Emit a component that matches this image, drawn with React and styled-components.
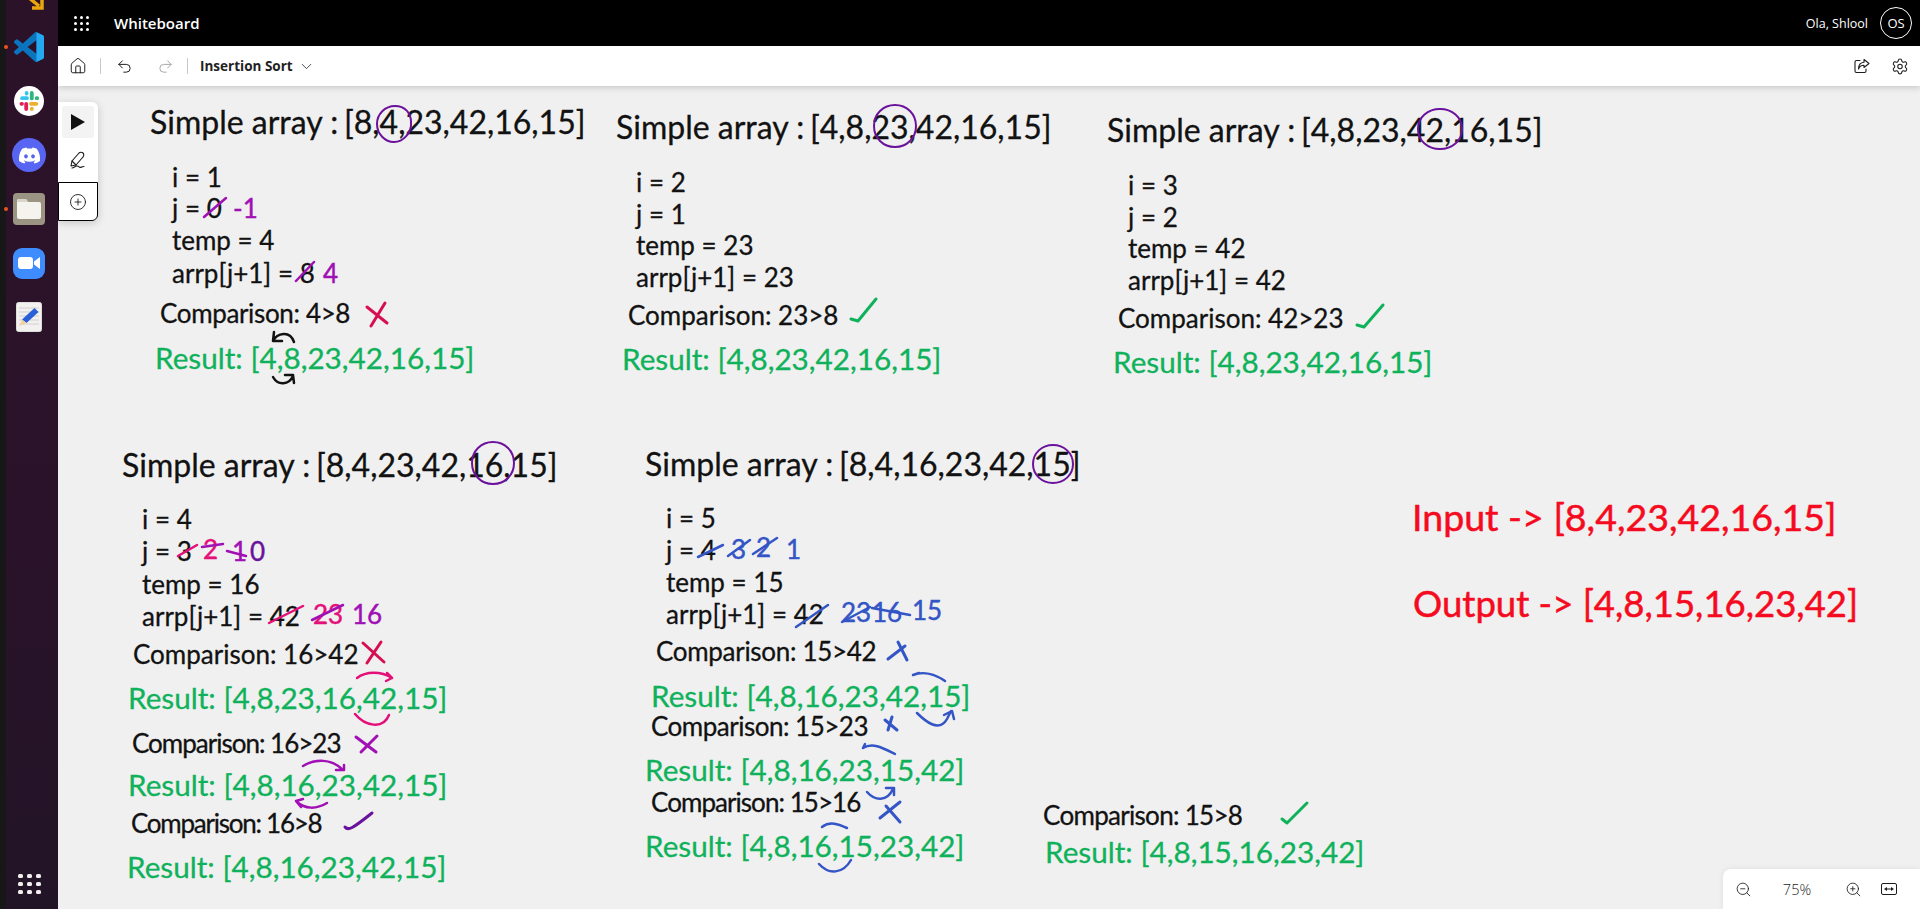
import React from 'react'
import styled, { createGlobalStyle } from 'styled-components'
import { Home, Undo2, Redo2, ChevronDown, Settings, ZoomIn, ZoomOut, CirclePlus } from 'lucide-react'
import { FaDiscord } from 'react-icons/fa6'

const GlobalStyle = createGlobalStyle`
  html, body { margin: 0; padding: 0; height: 100%; overflow: hidden; }
  body { font-family: "Open Sans", "Liberation Sans", sans-serif; }
`

const BLACK = '#121212'
const GREEN = '#0fb25b'
const RED = '#f50a20'
const PURPLE = '#a010b4'
const DEEP = '#6b129c'
const PINK = '#e3107a'
const CRIMSON = '#d60f52'
const BLUE = '#3355c6'

// lines: [text, x, y, letter spacing]
const notes = [
  {
    x: 150, y: 122, array: '[8,4,23,42,16,15]', varX: 172,
    vars: [['i = 1', 177], ['j = 0', 208], ['temp = 4', 240], ['arrp[j+1] = 8', 273]],
    lines: [['Comparison: 4>8', 160, 313, -0.35], ['Result: [4,8,23,42,16,15]', 155, 358]],
    fixes: [['-1', 233, 208, PURPLE], ['4', 323, 273, PURPLE]],
  },
  {
    x: 616, y: 127, array: '[4,8,23,42,16,15]', varX: 636,
    vars: [['i = 2', 182], ['j = 1', 214], ['temp = 23', 245], ['arrp[j+1] = 23', 277]],
    lines: [['Comparison: 23>8', 628, 315], ['Result: [4,8,23,42,16,15]', 622, 359]],
    fixes: [],
  },
  {
    x: 1107, y: 130, array: '[4,8,23,42,16,15]', varX: 1128,
    vars: [['i = 3', 185], ['j = 2', 217], ['temp = 42', 248], ['arrp[j+1] = 42', 280]],
    lines: [['Comparison: 42>23', 1118, 318], ['Result: [4,8,23,42,16,15]', 1113, 362]],
    fixes: [],
  },
  {
    x: 122, y: 465, array: '[8,4,23,42,16,15]', varX: 142,
    vars: [['i = 4', 519], ['j = 3', 551], ['temp = 16', 584], ['arrp[j+1] = 42', 616]],
    lines: [
      ['Comparison: 16>42', 133, 654], ['Result: [4,8,23,16,42,15]', 128, 698],
      ['Comparison: 16>23', 132, 743, -1], ['Result: [4,8,16,23,42,15]', 128, 785],
      ['Comparison: 16>8', 131, 823, -1.25], ['Result: [4,8,16,23,42,15]', 127, 867],
    ],
    fixes: [
      ['2', 203, 549, PINK], ['1', 232, 551, PURPLE], ['0', 250, 551, DEEP],
      ['23', 313, 614, PINK], ['16', 352, 614, PURPLE],
    ],
  },
  {
    x: 645, y: 464, array: '[8,4,16,23,42,15]', varX: 666,
    vars: [['i = 5', 518], ['j = 4', 550], ['temp = 15', 582], ['arrp[j+1] = 42', 614]],
    lines: [
      ['Comparison: 15>42', 656, 651, -0.3], ['Result: [4,8,16,23,42,15]', 651, 696],
      ['Comparison: 15>23', 651, 726, -0.5], ['Result: [4,8,16,23,15,42]', 645, 770],
      ['Comparison: 15>16', 651, 802, -0.95], ['Result: [4,8,16,15,23,42]', 645, 846],
    ],
    fixes: [
      ['3', 731, 549, BLUE], ['2', 756, 547, BLUE], ['1', 786, 549, BLUE],
      ['23', 841, 612, BLUE], ['16', 872, 612, BLUE], ['15', 912, 610, BLUE],
    ],
  },
  {
    vars: [],
    lines: [['Comparison: 15>8', 1043, 815, -0.7], ['Result: [4,8,15,16,23,42]', 1045, 852]],
    fixes: [],
  },
]

// pen strokes in page coordinates: [path, colour, width]
const strokes = [
  ['M411 122c1 11-8 20-17 20s-17-8-17-18 8-18 18-18 16 7 16 16', DEEP, 2],
  ['M204 217l22-19', PURPLE, 2.5],
  ['M296 281l18-19', PURPLE, 2.5],
  ['M367 307l20 16M385 303l-14 23', CRIMSON, 3],
  ['M273 341c4-8 17-11 21 1M274 332l-1 9 9 0', BLACK, 2.5],
  ['M273 377c5 9 16 8 20-1M293 375l-8 0M293 375l1 8', BLACK, 2.5],

  ['M916 126c0 12-9 21-21 21s-21-9-21-21 9-21 21-21 21 9 21 21', DEEP, 2],
  ['M851 319l7 2 18-22', GREEN, 3],

  ['M1462 129c0 12-10 20-22 20s-22-8-22-20 10-20 22-20 22 8 22 20', DEEP, 2],
  ['M1357 325l7 2 19-22', GREEN, 3],

  ['M514 463c0 12-9 21-21 21s-21-9-21-21 9-21 21-21 21 9 21 21', DEEP, 2],
  ['M178 556l19-11', PINK, 2.5],
  ['M202 547l21-3', PURPLE, 2.5],
  ['M227 551l19 5', PURPLE, 2.5],
  ['M269 623l34-17', PINK, 2.5],
  ['M312 620l31-15', PURPLE, 2.5],
  ['M363 643l21 19M381 642l-14 21', CRIMSON, 3],
  ['M357 678c9-7 24-7 35 0M387 673l5 5-6 3', PINK, 2.5],
  ['M355 714c10 12 28 16 34 1', PINK, 2.5],
  ['M356 737l20 15M377 736l-16 16', PURPLE, 3],
  ['M303 766c12-7 28-8 40 4M336 770l8 0 0-5', PURPLE, 2.5],
  ['M327 803c-10 6-22 7-31-2M296 801l7-2M296 801l5 6', PURPLE, 2.5],
  ['M345 827c3 4 7 2 27-14', DEEP, 3],

  ['M1073 464c0 11-9 19-20 19s-20-8-20-19 9-19 20-19 20 8 20 19', DEEP, 2],
  ['M698 557l25-12', BLUE, 2.5],
  ['M728 556l22-16', BLUE, 2.5],
  ['M753 554l24-16', BLUE, 2.5],
  ['M796 627l32-22', BLUE, 2.5],
  ['M842 622l28-15', BLUE, 2.5],
  ['M872 608l38 7', BLUE, 2.5],
  ['M888 659l17-13M898 642l9 18', BLUE, 3],
  ['M913 675c10-4 22-1 32 6M913 675l6-2', BLUE, 2.5],
  ['M917 713c8 8 22 20 30 6 2-4 3-6 4-8M944 715l8-4 2 8', BLUE, 2.5],
  ['M885 720l12 10M892 717l-4 13', BLUE, 3],
  ['M863 748c10-6 20 0 32 6M863 748l2-4', BLUE, 2.5],
  ['M867 792c8 9 20 10 26-3M886 788l8 0 0 7', BLUE, 2.5],
  ['M880 818l20-16M886 806l14 16', BLUE, 3],
  ['M822 827c8-6 16-3 25 1M822 827l5-3', BLUE, 2.5],
  ['M819 864c10 11 24 10 32-4', BLUE, 2.5],

  ['M1282 819l5 4 20-20', GREEN, 3],
]

const Page = styled.div`
  display: flex;
  width: 1920px;
  height: 909px;
  overflow: hidden;
`

const Dock = styled.aside`
  box-sizing: border-box;
  width: 58px;
  height: 909px;
  flex: none;
  display: flex;
  flex-direction: column;
  align-items: center;
  padding-right: 6px;
  border-left: 6px solid #171717;
  background: linear-gradient(180deg, #2c1229 0%, #2a132a 60%, #221427 100%);
`

const DockSlot = styled.div`
  position: relative;
  height: ${p => p.$h || 54}px;
  width: 100%;
  display: flex;
  align-items: ${p => p.$top ? 'flex-start' : 'center'};
  justify-content: center;
`

const TopArrow = styled.svg`
  margin-left: 14px;
`

const RunningDot = styled.span`
  position: absolute;
  left: -2px;
  top: 50%;
  width: 4px;
  height: 4px;
  margin-top: -2px;
  border-radius: 50%;
  background: #e95420;
`

const Tile = styled.div`
  box-sizing: border-box;
  width: ${p => p.$w}px;
  height: ${p => p.$h}px;
  border-radius: ${p => p.$r}px;
  background: ${p => p.$bg};
  display: flex;
  align-items: center;
  justify-content: center;
  color: #fff;
`

const DockGrid = styled.div`
  margin-top: auto;
  margin-bottom: 15px;
  display: grid;
  grid-template-columns: repeat(3, 5px);
  gap: 4px 4px;
  span { height: 4px; background: #f2eeee; border-radius: 1.5px; }
`

const Main = styled.div`
  flex: 1;
  min-width: 0;
  display: flex;
  flex-direction: column;
`

const TopBar = styled.header`
  height: 46px;
  flex: none;
  background: #000;
  color: #fff;
  display: flex;
  align-items: center;
  padding: 0 8px 0 16px;
`

const Waffle = styled.div`
  display: grid;
  grid-template-columns: repeat(3, 3px);
  gap: 3px;
  margin-right: 25px;
  span { width: 3px; height: 3px; background: #fff; border-radius: 50%; }
`

const AppName = styled.div`
  font-size: 15px;
  font-weight: 600;
`

const UserName = styled.div`
  margin-left: auto;
  margin-right: 12px;
  font-size: 12.5px;
`

const Avatar = styled.div`
  box-sizing: border-box;
  width: 32px;
  height: 32px;
  border: 1px solid #fff;
  border-radius: 50%;
  font-size: 13px;
  display: flex;
  align-items: center;
  justify-content: center;
`

const ToolBar = styled.div`
  position: relative;
  z-index: 2;
  height: 40px;
  flex: none;
  background: #fff;
  box-shadow: 0 2px 6px rgba(0, 0, 0, 0.16);
  display: flex;
  align-items: center;
  padding-left: 11px;
  color: #222;
`

const BarButton = styled.button`
  border: 0;
  background: none;
  padding: 0;
  width: 18px;
  height: 18px;
  display: flex;
  align-items: center;
  justify-content: center;
  color: ${p => p.$off ? '#a8a8a8' : '#1c1c1c'};
  margin-left: ${p => p.$ml || 0}px;
`

const Divider = styled.span`
  width: 1px;
  height: 16px;
  background: #c8c8c8;
  margin-left: ${p => p.$ml}px;
`

const BoardName = styled.div`
  margin-left: 12px;
  font-size: 13.5px;
  font-weight: 700;
  color: #222;
`

const BarRight = styled.div`
  margin-left: auto;
  margin-right: 11px;
  display: flex;
  gap: 20px;
`

const Canvas = styled.main`
  position: relative;
  flex: 1;
  background: #f0f0f0;
  overflow: hidden;
`

// everything hand written sits on the free canvas at its page position
const Ink = styled.div`
  position: absolute;
  left: ${p => p.$x - 58}px;
  top: ${p => p.$y - 86}px;
  transform: translateY(-50%);
  white-space: nowrap;
  font-family: Lato, "Open Sans", sans-serif;
  line-height: 1;
  font-size: ${p => p.$size}px;
  letter-spacing: ${p => p.$track || 0}px;
  color: ${p => p.$color || BLACK};
  -webkit-text-stroke: ${p => p.$pen || 0.3}px ${p => p.$color || BLACK};
`

const TitleLabel = styled.span`
  display: inline-block;
  width: 194px;
`

const StrokeLayer = styled.svg`
  position: absolute;
  left: 0;
  top: 0;
  width: 1862px;
  height: 823px;
  pointer-events: none;
`

const Palette = styled.div`
  position: absolute;
  left: 0;
  top: 16px;
  width: 40px;
  background: #fff;
  border-radius: 0 6px 6px 0;
  box-shadow: 0 2px 8px rgba(0, 0, 0, 0.18);
  display: flex;
  flex-direction: column;
  align-items: center;
  gap: 6px;
  padding-top: 4px;
`

const PaletteItem = styled.div`
  width: 32px;
  height: 32px;
  border-radius: 3px;
  background: ${p => p.$on ? '#f3f3f3' : 'transparent'};
  display: flex;
  align-items: center;
  justify-content: center;
  color: #1c1c1c;
`

const AddItem = styled.div`
  box-sizing: border-box;
  width: 40px;
  height: 39px;
  border: 1px solid #000;
  border-radius: 0 0 6px 0;
  background: #fff;
  display: flex;
  align-items: center;
  justify-content: center;
  color: #1c1c1c;
`

const ZoomBar = styled.div`
  position: absolute;
  right: 0;
  bottom: 0;
  width: 197px;
  height: 40px;
  background: #fff;
  border-top-left-radius: 8px;
  box-shadow: 0 0 6px rgba(0, 0, 0, 0.08);
  display: flex;
  align-items: center;
  padding-left: 12px;
  box-sizing: border-box;
  color: #1c1c1c;
`

const ZoomValue = styled.div`
  width: 76px;
  margin: 0 10px 0 7px;
  text-align: center;
  font-size: 14.5px;
  font-weight: 300;
`

const VsCode = () => (
  <svg width="30" height="30" viewBox="0 0 24 24">
    <path fill="#0a74bd" d="M23.15 2.587L18.21.21a1.494 1.494 0 0 0-1.705.29l-9.46 8.63-4.12-3.128a.999.999 0 0 0-1.276.057L.327 7.261A1 1 0 0 0 .326 8.74L3.899 12 .326 15.26a1 1 0 0 0 .001 1.479L1.65 17.94a.999.999 0 0 0 1.276.057l4.12-3.128 9.46 8.63a1.492 1.492 0 0 0 1.704.29l4.942-2.377A1.5 1.5 0 0 0 24 20.06V3.939a1.5 1.5 0 0 0-.85-1.352zm-5.146 14.861L10.826 12l7.178-5.448v10.896z" />
    <path fill="#24a8ef" d="M18 .1v5.9l0 12v5.9l5.1-2.4A1.5 1.5 0 0 0 24 20.06V3.94a1.5 1.5 0 0 0-.85-1.35z" />
  </svg>
)

const Slack = () => (
  <svg width="30" height="30" viewBox="0 0 30 30">
    <circle cx="15" cy="15" r="15" fill="#fff" />
    <g fill="none" strokeWidth="3.8" strokeLinecap="round">
      <path stroke="#36c5f0" d="M8 12.2h5M12.6 7v.6" />
      <path stroke="#2eb67d" d="M17.800 7v5.400M22.600 12.200h.6" />
      <path stroke="#ecb22e" d="M17 17.800h5.400M17.800 22.600v.4" />
      <path stroke="#e01e5a" d="M12.200 17.800v5.200M7.400 17.800h.6" />
    </g>
  </svg>
)

const Folder = () => (
  <svg width="24" height="20" viewBox="0 0 24 20">
    <path fill="#f5f3ee" d="M2 0h7l2 3h11a2 2 0 0 1 2 2v13a2 2 0 0 1-2 2H2a2 2 0 0 1-2-2V2a2 2 0 0 1 2-2z" />
    <path fill="#d9d5cb" d="M2 0h7l2 3H0V2a2 2 0 0 1 2-2z" />
  </svg>
)

const Editor = () => (
  <svg width="26" height="30" viewBox="0 0 26 30">
    <rect x="0.5" y="0.5" width="25" height="29" rx="2" fill="#f2f1ef" stroke="#ddd" />
    <path stroke="#c9c9c9" strokeWidth="0.8" d="M3 6h20M3 10h20M3 14h20M3 18h20M3 22h20" />
    <path fill="#2a5fd8" d="M18.5 6l4 4-12 11-4.500-3.500z" />
    <path fill="#f5cf9d" d="M6 17.500l4.500 3.500-7 3z" />
  </svg>
)

const PenIcon = () => (
  <svg width="18" height="18" viewBox="0 0 18 18" fill="none" stroke="#1c1c1c" strokeWidth="1.1" strokeLinecap="round" strokeLinejoin="round">
    <path d="M2 15l1-5 7-8c1-1 3-1 4 0s1 3 0 4l-7 8z" />
    <path d="M3 10l4 4M3 17c2 0 3-2 5-2s2 1.500 3 1.500 2-1 4-1" />
  </svg>
)

const ShareIcon = () => (
  <svg width="16" height="16" viewBox="0 0 16 16" fill="none" stroke="#1c1c1c" strokeWidth="1.1" strokeLinejoin="round" strokeLinecap="round">
    <path d="M6 2.500H2.500a1.500 1.500 0 0 0-1.500 1.500v9a1.500 1.500 0 0 0 1.500 1.500h8a1.500 1.500 0 0 0 1.500-1.500v-2" />
    <path d="M10 1.500l5 4-5 4V7.300C7.500 7.300 5.500 8.500 4.500 11c0-4 2-6.500 5.500-6.800z" />
  </svg>
)

const FitIcon = () => (
  <svg width="16" height="12" viewBox="0 0 16 12" fill="none" stroke="#1c1c1c" strokeWidth="1">
    <rect x="0.5" y="0.5" width="15" height="11" rx="1.500" />
    <path d="M5 6h6" />
    <path fill="#1c1c1c" stroke="none" d="M6 4v4L3 6zM10 4v4l3-2z" />
  </svg>
)

const dots = n => Array.from({ length: n }, (_, i) => <span key={i} />)

function Note({ note }) {
  return (
    <>
      {note.array && (
        <Ink $x={note.x} $y={note.y} $size={32}>
          <TitleLabel>Simple array :</TitleLabel>{note.array}
        </Ink>
      )}
      {note.vars.map(([text, y]) => (
        <Ink key={text} $x={note.varX} $y={y} $size={26}>{text}</Ink>
      ))}
      {note.lines.map(([text, x, y, track]) => {
        const result = text.startsWith('Result')
        return (
          <Ink key={text + y} $x={x} $y={y} $size={result ? 29.7 : 26} $track={track} $color={result ? GREEN : BLACK}>{text}</Ink>
        )
      })}
      {note.fixes.map(([text, x, y, color]) => (
        <Ink key={text + x} $x={x} $y={y} $size={26} $color={color} $pen={0.45}>{text}</Ink>
      ))}
    </>
  )
}

export default function App() {
  return (
    <Page>
      <GlobalStyle />
      <Dock>
        <DockSlot $h={20} $top>
          <TopArrow width="18" height="11" viewBox="0 0 18 11" fill="none" stroke="#e8a60c" strokeWidth="3.500">
            <path d="M1 -3l11 9M15 -2v10H5" />
          </TopArrow>
        </DockSlot>
        <DockSlot><RunningDot /><VsCode /></DockSlot>
        <DockSlot><Slack /></DockSlot>
        <DockSlot>
          <Tile $w={34} $h={34} $r={17} $bg="#5865f2"><FaDiscord size={23} /></Tile>
        </DockSlot>
        <DockSlot>
          <RunningDot />
          <Tile $w={32} $h={32} $r={4} $bg="#9b9482"><Folder /></Tile>
        </DockSlot>
        <DockSlot>
          <Tile $w={32} $h={31} $r={9} $bg="#3f8cff">
            <svg width="22" height="12" viewBox="0 0 22 12" fill="#fff">
              <rect width="15" height="12" rx="3" />
              <path d="M16 4.500L22 0v12l-6-4.500z" />
            </svg>
          </Tile>
        </DockSlot>
        <DockSlot><Editor /></DockSlot>
        <DockGrid>{dots(9)}</DockGrid>
      </Dock>
      <Main>
        <TopBar>
          <Waffle>{dots(9)}</Waffle>
          <AppName>Whiteboard</AppName>
          <UserName>Ola, Shlool</UserName>
          <Avatar>OS</Avatar>
        </TopBar>
        <ToolBar>
          <BarButton><Home size={18} strokeWidth={1.3} /></BarButton>
          <Divider $ml={13} />
          <BarButton $ml={14}><Undo2 size={17} strokeWidth={1.4} /></BarButton>
          <BarButton $off $ml={23}><Redo2 size={17} strokeWidth={1.4} /></BarButton>
          <Divider $ml={13} />
          <BoardName>Insertion Sort</BoardName>
          <BarButton $ml={5}><ChevronDown size={17} strokeWidth={1.1} /></BarButton>
          <BarRight>
            <BarButton><ShareIcon /></BarButton>
            <BarButton><Settings size={19} strokeWidth={1.4} /></BarButton>
          </BarRight>
        </ToolBar>
        <Canvas>
          {notes.map((note, i) => <Note key={i} note={note} />)}
          <Ink $x={1412} $y={517} $size={37.500} $color={RED} $pen={0.5}>Input -&gt; [8,4,23,42,16,15]</Ink>
          <Ink $x={1413} $y={603} $size={36.500} $color={RED} $pen={0.5}>Output -&gt; [4,8,15,16,23,42]</Ink>
          <StrokeLayer viewBox="58 86 1862 823" fill="none" strokeLinecap="round" strokeLinejoin="round">
            {strokes.map(([d, color, width], i) => (
              <path key={i} d={d} stroke={color} strokeWidth={width} />
            ))}
          </StrokeLayer>
          <Palette>
            <PaletteItem $on>
              <svg width="14" height="16" viewBox="0 0 14 16"><path fill="#111" d="M0 0l14 8-14 8z" /></svg>
            </PaletteItem>
            <PaletteItem><PenIcon /></PaletteItem>
            <AddItem><CirclePlus size={18} strokeWidth={1.2} /></AddItem>
          </Palette>
          <ZoomBar>
            <ZoomOut size={17} strokeWidth={1.2} />
            <ZoomValue>75%</ZoomValue>
            <ZoomIn size={17} strokeWidth={1.2} />
            <BarButton $ml={18}><FitIcon /></BarButton>
          </ZoomBar>
        </Canvas>
      </Main>
    </Page>
  )
}
